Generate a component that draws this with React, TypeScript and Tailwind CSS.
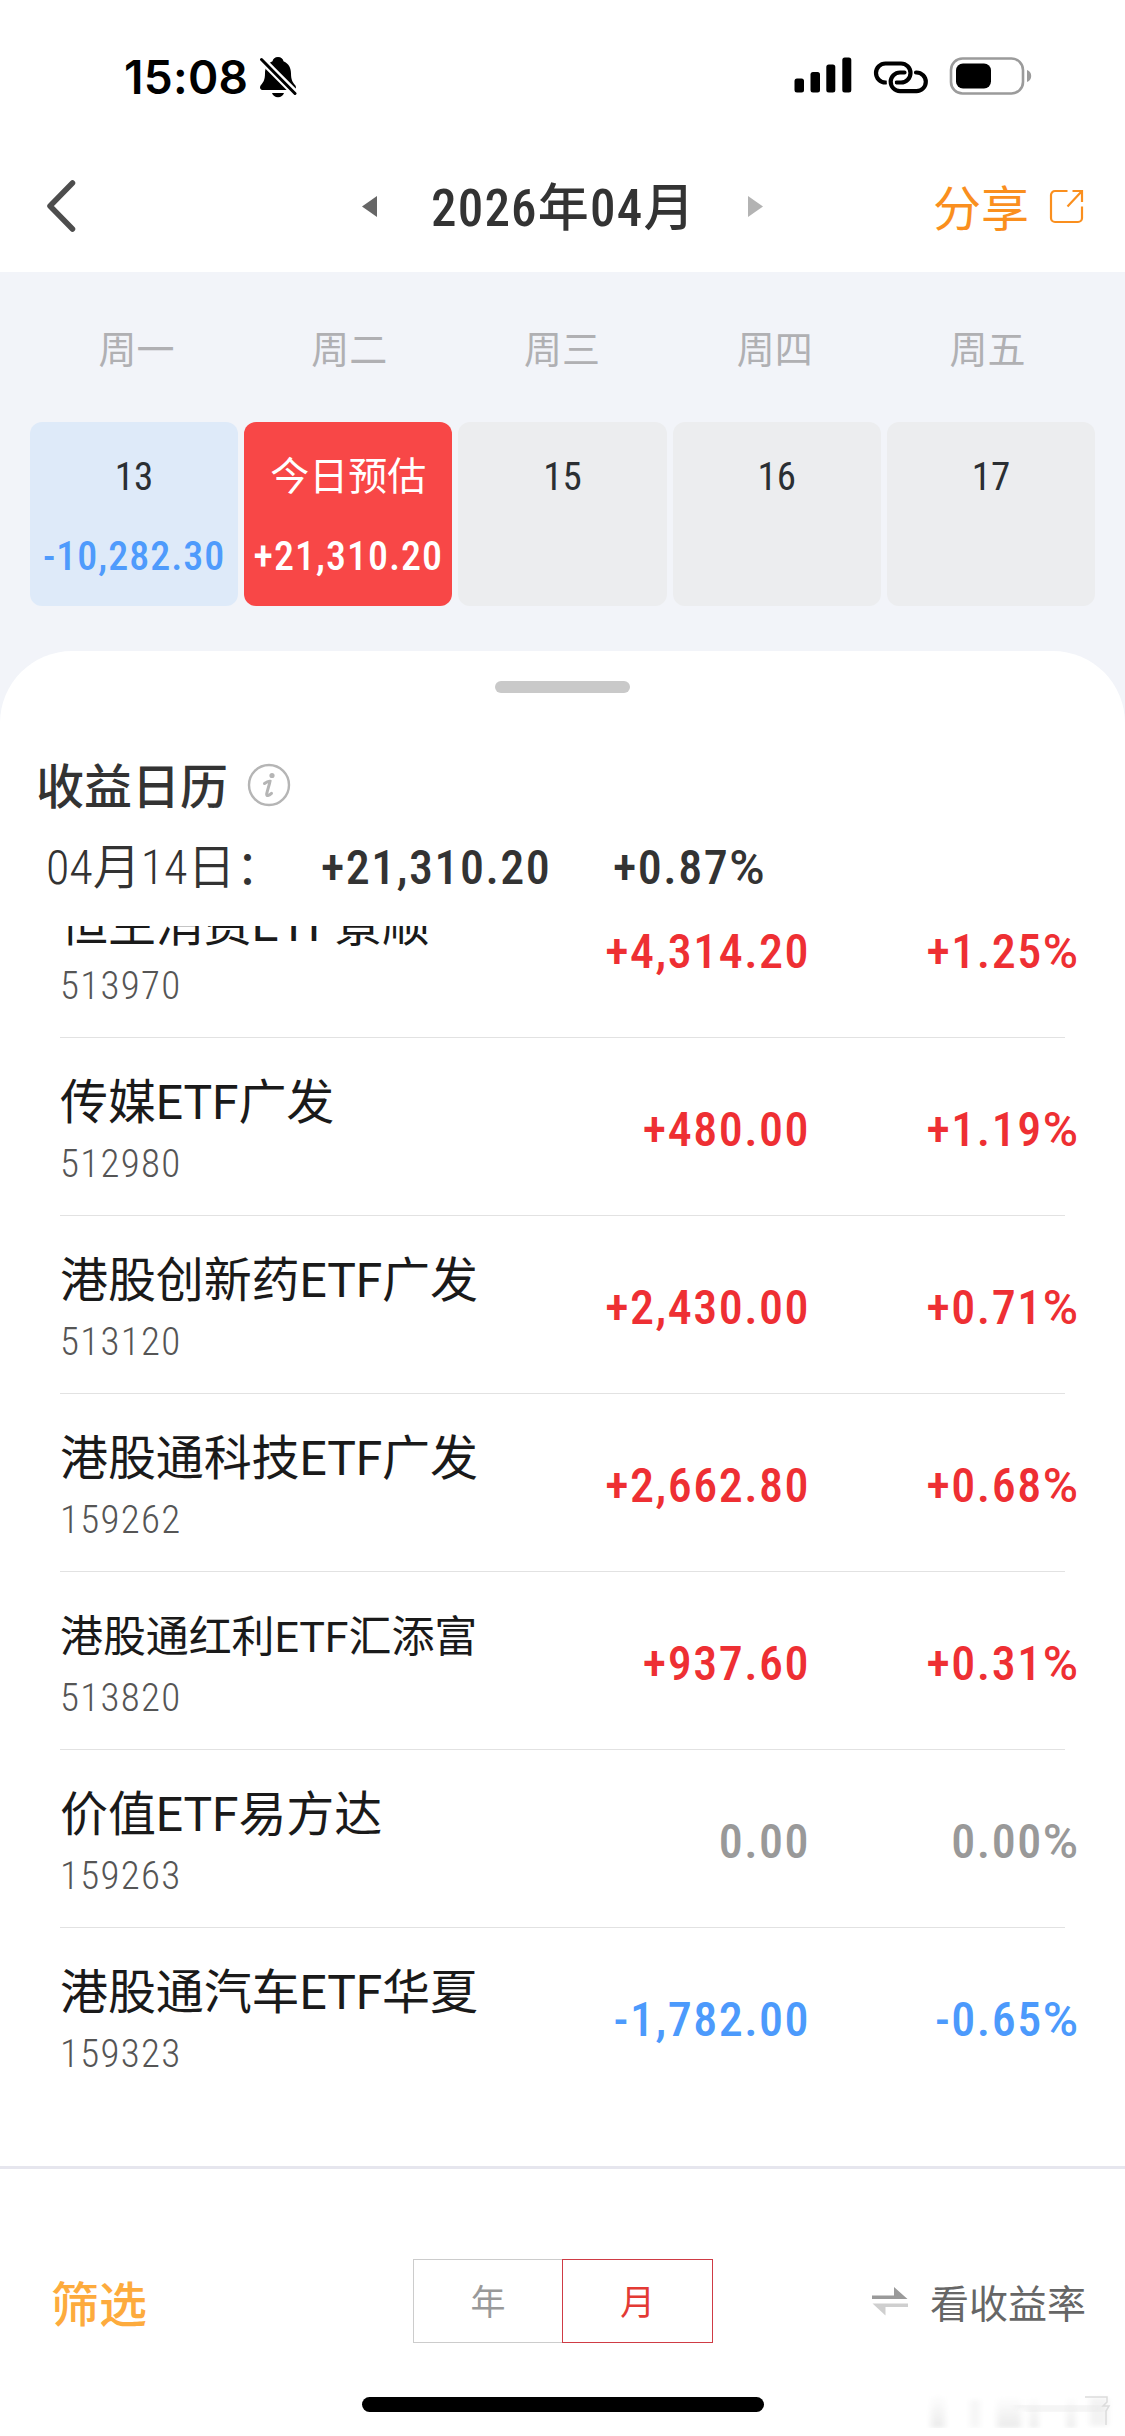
import React from 'react';
import { clsx } from 'clsx';

type Trend = 'up' | 'down' | 'flat';

interface Holding {
  name: string;
  code: string;
  amount: string;
  rate: string;
  trend: Trend;
  compact?: boolean;
}

const WEEKDAYS = ['周一', '周二', '周三', '周四', '周五'];

const DAYS = [
  { label: '13', amount: '-10,282.30', className: 'bg-[#deeaf9] text-[#2b2f33]', amountClass: 'text-[#4f9bfc]' },
  { label: '今日预估', amount: '+21,310.20', className: 'bg-[#f84747] text-white', amountClass: 'text-white' },
  { label: '15', amount: '', className: 'bg-[#ecedef] text-[#2b2f33]', amountClass: '' },
  { label: '16', amount: '', className: 'bg-[#ecedef] text-[#2b2f33]', amountClass: '' },
  { label: '17', amount: '', className: 'bg-[#ecedef] text-[#2b2f33]', amountClass: '' },
];

const HOLDINGS: Holding[] = [
  { name: '恒生消费ETF景顺', code: '513970', amount: '+4,314.20', rate: '+1.25', trend: 'up' },
  { name: '传媒ETF广发', code: '512980', amount: '+480.00', rate: '+1.19', trend: 'up' },
  { name: '港股创新药ETF广发', code: '513120', amount: '+2,430.00', rate: '+0.71', trend: 'up' },
  { name: '港股通科技ETF广发', code: '159262', amount: '+2,662.80', rate: '+0.68', trend: 'up' },
  { name: '港股通红利ETF汇添富', code: '513820', amount: '+937.60', rate: '+0.31', trend: 'up', compact: true },
  { name: '价值ETF易方达', code: '159263', amount: '0.00', rate: '0.00', trend: 'flat' },
  { name: '港股通汽车ETF华夏', code: '159323', amount: '-1,782.00', rate: '-0.65', trend: 'down' },
];

const trendColor: Record<Trend, string> = {
  up: 'text-[#ee2f33]',
  down: 'text-[#4c9afc]',
  flat: 'text-[#999999]',
};

function StatusBar() {
  return (
    <div className="flex h-[152px] items-start justify-between pt-[54px] pr-[93px] pl-[124px]">
      <div className="flex h-[46px] items-center">
        <span className="w-[135px] font-['Inter'] text-[46px] leading-[46px] font-semibold tracking-[0.3px] text-black">
          15:08
        </span>
        <svg className="h-[42px] w-[38px]" viewBox="0 0 38 42">
          <path
            d="M19 1c3 0 5 1.900 5.500 4.300C30 7.500 32 12.500 32 17.500c0 6 1.500 8.500 4 11.500 1.800 2.200 1 5-2 5H4c-3 0-3.800-2.800-2-5 2.500-3 4-5.500 4-11.500 0-5 2-10 7.500-12.200C14 2.900 16 1 19 1z"
            fill="#000"
          />
          <path d="M13 37h12c-.8 2.600-3 4.200-6 4.200s-5.200-1.600-6-4.200z" fill="#000" />
          <path d="M1 2l37 37" stroke="#fff" strokeWidth="7.500" />
          <path d="M2.500 3.500l33.500 34" stroke="#000" strokeWidth="3" strokeLinecap="round" />
        </svg>
      </div>
      <div className="flex h-[42px] items-center">
        <svg className="h-[36px] w-[58px]" viewBox="0 0 58 36" fill="#000">
          <rect x="0.500" y="21.500" width="9.500" height="14" rx="2.500" />
          <rect x="16.500" y="15" width="9.500" height="20.500" rx="2.500" />
          <rect x="32.300" y="7.500" width="9" height="28" rx="2.500" />
          <rect x="48.300" y="0.500" width="9" height="35" rx="2.500" />
        </svg>
        <svg className="mt-[3px] ml-[21px] h-[34px] w-[56px]" viewBox="0 0 56 34" fill="none" stroke="#000" strokeWidth="4.200" strokeLinecap="round">
          <path d="M13 22.500h-.5a9.500 9.500 0 0 1 0-19H28a9.500 9.500 0 0 1 0 19h-4.500" />
          <path d="M43 12.500h.5a9.300 9.300 0 0 1 0 18.600H27a9.300 9.300 0 0 1 0-18.600h4.500" stroke="#fff" strokeWidth="8" strokeDasharray="0 44 20 100" strokeLinecap="butt" />
          <path d="M43 12.500h.5a9.300 9.300 0 0 1 0 18.600H27a9.300 9.300 0 0 1 0-18.600h4.500" />
        </svg>
        <svg className="mt-[1px] ml-[20px] h-[38px] w-[83px]" viewBox="0 0 83 38">
          <rect x="2" y="1.500" width="72" height="35" rx="11.500" fill="none" stroke="#9b9b9b" strokeWidth="2.600" />
          <rect x="7" y="6.500" width="35" height="25" rx="7" fill="#000" />
          <path d="M78 13c3 1 4.200 3.400 4.200 6s-1.200 5-4.200 6z" fill="#9b9b9b" />
        </svg>
      </div>
    </div>
  );
}

function NavBar() {
  return (
    <header className="flex h-[120px] items-center pr-[41px] pb-[12px] pl-[46px]">
      <svg className="h-[54px] w-[31px]" viewBox="0 0 31 54" fill="none" stroke="#4d4d4d" strokeWidth="5.500" strokeLinecap="round" strokeLinejoin="round">
        <path d="M26.500 4L4 27l22.500 23" />
      </svg>
      <div className="ml-[285px] flex items-center">
        <svg className="h-[21px] w-[15px]" viewBox="0 0 15 21">
          <path d="M15 0v21L0 10.500z" fill="#666" />
        </svg>
        <h1 className="mt-[6px] ml-[54px] w-[317px] text-[51px] leading-[60px] font-medium tracking-[1.2px] whitespace-nowrap text-[#333] [font-stretch:85%]">
          2026年04月
        </h1>
        <svg className="h-[21px] w-[15px]" viewBox="0 0 15 21">
          <path d="M0 0v21l15-10.500z" fill="#b3b3b3" />
        </svg>
      </div>
      <div className="ml-auto flex items-center text-[#fa8f1e]">
        <span className="mt-[8px] text-[48px] leading-[60px]">分享</span>
        <svg className="ml-[20px] h-[35px] w-[35px]" viewBox="0 0 35 35" fill="none" stroke="currentColor" strokeWidth="2.200">
          <path d="M18.500 2H6a4 4 0 0 0-4 4v23a4 4 0 0 0 4 4h23a4 4 0 0 0 4-4V17.500" />
          <path d="M23.500 2H33v11M33 2L18.500 17.500" />
        </svg>
      </div>
    </header>
  );
}

function WeekStrip() {
  return (
    <section className="h-[379px] bg-[#f2f4f9] px-[30px] pt-[50px]">
      <div className="mr-[1px] grid grid-cols-5 text-center text-[38px] leading-[56px] text-[#b0b0b3]">
        {WEEKDAYS.map((day) => (
          <span key={day}>{day}</span>
        ))}
      </div>
      <div className="mt-[44px] grid grid-cols-5 gap-[6px]">
        {DAYS.map((day) => (
          <div
            key={day.label}
            className={clsx('flex h-[184px] flex-col items-center rounded-xl pt-[32px] whitespace-nowrap', day.className)}
          >
            <span className="text-[39px] leading-[46px] [font-stretch:85%]">{day.label}</span>
            <span
              className={clsx(
                'mt-[34px] text-[40px] leading-[46px] font-medium tracking-[1px] [font-stretch:85%]',
                day.amountClass
              )}
            >
              {day.amount}
            </span>
          </div>
        ))}
      </div>
    </section>
  );
}

function InfoIcon() {
  return (
    <svg className="h-[44px] w-[44px]" viewBox="0 0 44 44" fill="none">
      <circle cx="22" cy="22" r="20" stroke="#b5b5b5" strokeWidth="2.400" />
      <circle cx="25" cy="12.500" r="2.600" fill="#b5b5b5" />
      <path d="M17.500 20.500c2-1.500 4.500-2.500 5.500-2.200-.5 3-2.800 9.500-3.300 12.500-.4 2.600 2.200 2 4.800-.5" stroke="#b5b5b5" strokeWidth="3" strokeLinecap="round" />
    </svg>
  );
}

function Rate({ value, className }: { value: string; className?: string }) {
  return (
    <span className={className}>
      <span className="tracking-[1.5px]">{value}</span>
      <span className="[font-stretch:100%]">%</span>
    </span>
  );
}

function HoldingRow({ item }: { item: Holding }) {
  return (
    <li className="flex h-[178px] border-b border-[#e2e2e2] last:border-b-0">
      <div className="w-[440px] shrink-0 pt-[34px] whitespace-nowrap">
        <div
          className={clsx(
            'h-[62px] leading-[62px] tracking-[-0.1px] text-[#1a1a1a]',
            item.compact ? 'text-[43px]' : 'text-[48px]'
          )}
        >
          {item.name}
        </div>
        <div className="mt-[7px] text-[39px] leading-[46px] font-light tracking-[1.3px] text-[#555] [font-stretch:85%]">
          {item.code}
        </div>
      </div>
      <div
        className={clsx(
          'flex shrink-0 pt-[68px] text-[48px] leading-[48px] font-medium [font-stretch:85%]',
          trendColor[item.trend]
        )}
      >
        <span className="w-[310px] text-right tracking-[1.5px]">{item.amount}</span>
        <Rate value={item.rate} className="w-[268px] text-right" />
      </div>
    </li>
  );
}

function Sheet() {
  return (
    <section className="bg-[#f2f4f9]">
      <div className="flex h-[1515px] flex-col rounded-t-[72px] bg-white">
        <div className="mx-auto mt-[30px] h-[12px] w-[135px] rounded-full bg-[#c9c9c9]" />
        <div className="mt-[62px] flex h-[60px] items-center pl-[36px]">
          <h2 className="mt-[6px] w-[211px] text-[48px] leading-[60px] font-medium text-[#333]">收益日历</h2>
          <InfoIcon />
        </div>
        <div className="mt-[23px] flex h-[60px] items-center pl-[46px] text-[48px] leading-[60px] whitespace-nowrap text-[#333] [font-stretch:85%]">
          <span className="w-[275px] font-[350]">04月14日：</span>
          <span className="w-[292px] font-medium tracking-[1.5px]">+21,310.20</span>
          <Rate value="+0.87" className="font-medium" />
        </div>
        {/* list is scrolled, the first row slides under the summary */}
        <div className="mt-[28px] flex flex-1 flex-col justify-end overflow-hidden pb-[60px]">
          <ul className="ml-[60px] w-[1005px]">
            {HOLDINGS.map((item) => (
              <HoldingRow key={item.code} item={item} />
            ))}
          </ul>
        </div>
      </div>
    </section>
  );
}

function BottomBar() {
  return (
    <footer className="relative h-[270px] border-t-[3px] border-[#e6e6ee]">
      <div className="mt-[90px] flex h-[84px] items-center pr-[39px] pl-[51px]">
        <button type="button" className="mt-[9px] w-[362px] text-left text-[48px] leading-[60px] font-medium text-[#fdab3d]">
          筛选
        </button>
        <div className="flex h-[84px] text-[35px] leading-[84px]">
          <button type="button" className="w-[149px] border border-r-0 border-[#cccccc] pt-[2px] text-[#999]">
            年
          </button>
          <button type="button" className="w-[151px] border border-[#cf3b45] pt-[2px] text-[#e33a34]">
            月
          </button>
        </div>
        <div className="ml-auto flex items-center">
          <svg className="h-[30px] w-[36px]" viewBox="0 0 36 30">
            <path d="M0 9.500h22V1l13.500 12H0z" fill="#9a9a9a" />
            <path d="M36 21H13.500v8.500L.5 17.500H36z" fill="#cfcfcf" />
          </svg>
          <span className="mt-[7px] ml-[22px] text-[39px] leading-[56px] text-[#666]">看收益率</span>
        </div>
      </div>
      <div className="mx-auto mt-[54px] h-[15px] w-[402px] rounded-full bg-black" />
      {/* washed-out stamp over the corner */}
      <svg className="absolute right-[8px] bottom-[8px] h-[42px] w-[192px]" viewBox="0 0 192 42">
        <defs>
          <filter id="soft" x="-20%" y="-20%" width="140%" height="140%">
            <feGaussianBlur stdDeviation="3 2" />
          </filter>
          <linearGradient id="fade" x1="0" y1="0" x2="0" y2="1">
            <stop offset="0" stopColor="#fff" />
            <stop offset="1" stopColor="#ebebeb" />
          </linearGradient>
        </defs>
        <g filter="url(#soft)">
          <rect x="6" y="8" width="14" height="34" fill="url(#fade)" />
          <rect x="45" y="14" width="10" height="28" fill="#f6f6f6" />
          <rect x="72" y="10" width="24" height="32" fill="url(#fade)" />
          <rect x="105" y="10" width="8" height="32" fill="url(#fade)" />
          <rect x="142" y="10" width="8" height="32" fill="url(#fade)" />
          <rect x="165" y="12" width="18" height="28" fill="#f3f3f3" />
        </g>
        <path d="M90 20h90M100 25h80" fill="none" stroke="#e6e6e6" strokeWidth="2" filter="url(#soft)" />
        <path d="M160 11h22v5l-4 4h6l-3 5v14" fill="none" stroke="#dcdcdc" strokeWidth="1.500" />
      </svg>
    </footer>
  );
}

export default function App() {
  return (
    <main className="h-[2436px] w-[1125px] overflow-hidden bg-white font-['Roboto','Noto_Sans_CJK_SC',sans-serif]">
      <StatusBar />
      <NavBar />
      <WeekStrip />
      <Sheet />
      <BottomBar />
    </main>
  );
}
